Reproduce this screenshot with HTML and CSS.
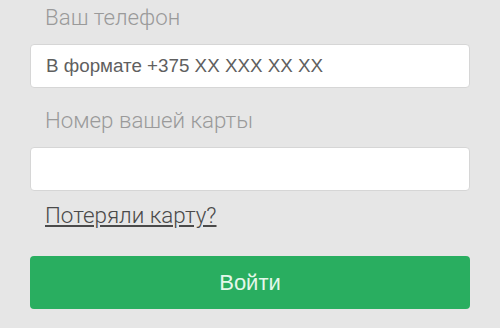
FILE: index.html
```html
<!DOCTYPE html>
<html lang="ru">
<head>
<meta charset="utf-8">
<link rel="stylesheet" href="styles.css">
</head>
<body>
<form class="form">
  <label class="label label-first">Ваш телефон</label>
  <div class="input"><span class="placeholder">В формате +375 XX XXX XX XX</span></div>
  <label class="label label-second">Номер вашей карты</label>
  <div class="input"></div>
  <a class="link" href="#">Потеряли карту?</a>
  <button class="button" type="button">Войти</button>
</form>
</body>
</html>
```
FILE: styles.css
```css
html, body {
  margin: 0;
  padding: 0;
  background: #e6e6e6;
  width: 500px;
  height: 328px;
  overflow: hidden;
}
.form {
  display: flex;
  flex-direction: column;
  padding: 0 30px 0 30px;
}
.label {
  font-family: Roboto, "Liberation Sans", sans-serif;
  font-weight: 300;
  font-size: 22.3px;
  line-height: 32px;
  color: #9a9a9a;
  padding-left: 15px;
  height: 32px;
}
.label-first { margin-top: 1px; margin-bottom: 11px; }
.label-second { margin-top: 16px; margin-bottom: 11px; }
.input {
  box-sizing: border-box;
  height: 44px;
  background: #fff;
  border: 1px solid #d6d6d6;
  border-radius: 4px;
  display: flex;
  align-items: center;
  padding-left: 15px;
}
.placeholder {
  font-family: "Liberation Sans", Arial, sans-serif;
  font-size: 18.8px;
  color: #5f5f5f;
}
.link {
  font-family: Roboto, "Liberation Sans", sans-serif;
  font-weight: 300;
  font-size: 22.4px;
  line-height: 30px;
  color: #4a4a4a;
  text-decoration: underline;
  text-underline-offset: 2px;
  margin: 9px 0 26px 15px;
  align-self: flex-start;
}
.button {
  height: 53px;
  border: none;
  border-radius: 4px;
  background: #29ae60;
  color: #e4f7ea;
  font-family: "Liberation Sans", Arial, sans-serif;
  font-size: 22px;
  line-height: 53px;
  padding: 0;
}
```
